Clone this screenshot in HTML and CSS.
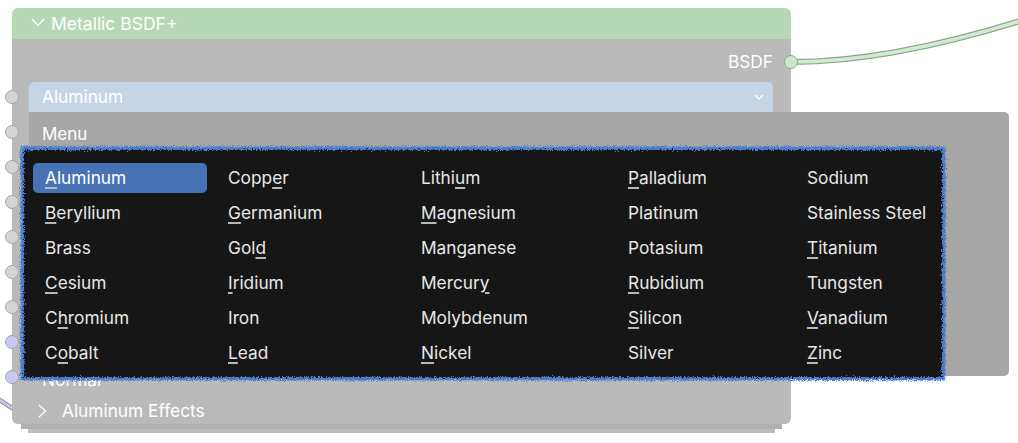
FILE: index.html
```html
<!DOCTYPE html>
<html>
<head>
<meta charset="utf-8">
<link rel="stylesheet" href="styles.css">
</head>
<body>
<svg class="defs" width="0" height="0" aria-hidden="true">
  <filter id="rough" x="-3%" y="-6%" width="106%" height="112%">
    <feTurbulence type="fractalNoise" baseFrequency="0.85" numOctaves="2" seed="3" result="n"/>
    <feDisplacementMap in="SourceGraphic" in2="n" scale="6" xChannelSelector="R" yChannelSelector="G"/>
  </filter>
</svg>
<svg class="wires" width="1018" height="443" viewBox="0 0 1018 443">
  <path d="M792 62 C 850 62, 920 52, 1020 21" stroke="#8f9f8f" stroke-width="6" fill="none"/>
  <path d="M792 62 C 850 62, 920 52, 1020 21" stroke="#cfeccf" stroke-width="3.6" fill="none"/>
  <path d="M-2 399 L15 410" stroke="#8f8fa8" stroke-width="4.5" fill="none"/>
  <path d="M-2 399 L15 410" stroke="#c9c9ee" stroke-width="2.6" fill="none"/>
</svg>
<div class="canvas">
  <div class="node">
    <div class="header">
      <svg class="hchev" width="14" height="9" viewBox="0 0 14 9"><polyline points="1,1 7,7.5 13,1" fill="none" stroke="#fff" stroke-width="1.4"/></svg>
      <span>Metallic BSDF+</span>
    </div>
    <div class="nbody">
      <div class="row out">BSDF<span class="sock sock-out"></span></div>
      <div class="row"><span class="sock"></span>
        <div class="select"><span>Aluminum</span>
          <svg class="schev" width="10" height="6" viewBox="0 0 10 6"><polyline points="1,1 5,5 9,1" fill="none" stroke="#fff" stroke-width="1.5"/></svg>
        </div>
      </div>
      <div class="row"><span class="sock"></span></div>
      <div class="row"><span class="sock"></span></div>
      <div class="row"><span class="sock"></span></div>
      <div class="row"><span class="sock"></span></div>
      <div class="row"><span class="sock"></span></div>
      <div class="row"><span class="sock"></span></div>
      <div class="row"><span class="sock sock-lav"></span></div>
      <div class="row"><span class="sock sock-lav"></span><span class="lbl">Normal</span></div>
      <div class="row panelrow">
        <svg class="pchev" width="9" height="14" viewBox="0 0 9 14"><polyline points="1,1 7.5,7 1,13" fill="none" stroke="#fff" stroke-width="1.4"/></svg>
        <span>Aluminum Effects</span>
      </div>
    </div>
    <div class="popup">
      <div class="ptitle">Menu</div>
      <div class="menu">
        <div class="menu-bg"></div>
        <div class="grid">
          <div class="item active"><u>A</u>luminum</div>
          <div class="item">Copp<u>e</u>r</div>
          <div class="item">Lithi<u>u</u>m</div>
          <div class="item"><u>P</u>alladium</div>
          <div class="item">Sodium</div>

          <div class="item"><u>B</u>eryllium</div>
          <div class="item"><u>G</u>ermanium</div>
          <div class="item"><u>M</u>agnesium</div>
          <div class="item">Platinum</div>
          <div class="item">Stainless Steel</div>

          <div class="item">Brass</div>
          <div class="item">Gol<u>d</u></div>
          <div class="item">Manganese</div>
          <div class="item">Potasium</div>
          <div class="item"><u>T</u>itanium</div>

          <div class="item"><u>C</u>esium</div>
          <div class="item"><u>I</u>ridium</div>
          <div class="item">Mercur<u>y</u></div>
          <div class="item"><u>R</u>ubidium</div>
          <div class="item">Tungsten</div>

          <div class="item">C<u>h</u>romium</div>
          <div class="item">Iron</div>
          <div class="item">Molybdenum</div>
          <div class="item"><u>S</u>ilicon</div>
          <div class="item"><u>V</u>anadium</div>

          <div class="item">C<u>o</u>balt</div>
          <div class="item"><u>L</u>ead</div>
          <div class="item"><u>N</u>ickel</div>
          <div class="item">Silver</div>
          <div class="item"><u>Z</u>inc</div>
        </div>
      </div>
    </div>
  </div>
</div>
</body>
</html>
```
FILE: styles.css
```css
html, body {
  margin: 0;
  padding: 0;
  background: #ffffff;
  width: 1018px;
  height: 443px;
  overflow: hidden;
  font-family: Inter, "Noto Sans", "DejaVu Sans", sans-serif;
}
.defs { position: absolute; width: 0; height: 0; }
.wires { position: absolute; left: 0; top: 0; }
.canvas {
  position: relative;
  padding: 8px 0 0 12px;
}
.node {
  position: relative;
  width: 779px;
  border-radius: 6px;
  box-shadow: 0 14px 0 -9px #b0b0b0, 0 25px 0 -16px #bdbdbd;
}
.header {
  height: 31px;
  background: #b5d8b5;
  border-radius: 6px 6px 0 0;
  display: flex;
  align-items: center;
  color: #fff;
  font-size: 17.5px;
}
.hchev { margin: 0 6px 2px 19px; }
.nbody {
  background: #bababa;
  border-radius: 0 0 6px 6px;
  padding-top: 5px;
  height: 385px;
  box-sizing: border-box;
}
.row {
  position: relative;
  height: 35px;
  display: flex;
  align-items: center;
  color: #fff;
  font-size: 17.3px;
}
.row.out { justify-content: flex-end; padding-right: 18px; }
.sock {
  position: absolute;
  left: -7px;
  top: 50%;
  width: 12px;
  height: 12px;
  margin-top: -7px;
  border-radius: 50%;
  background: #d4d4d4;
  border: 1px solid #a8a8a8;
}
.sock-out { left: auto; right: -7px; background: #c9e9c9; border-color: #93a893; }
.sock-lav { background: #cacaf0; border-color: #a0a0bc; }
.select {
  margin-left: 17px;
  width: 744px;
  height: 30px;
  background: #c6d5e6;
  border-radius: 5px 5px 0 0;
  display: flex;
  align-items: center;
  justify-content: space-between;
  padding: 0 9px 0 13px;
  box-sizing: border-box;
}
.lbl { margin: 5px 0 0 30px; }
.panelrow { padding-left: 26px; padding-bottom: 2px; box-sizing: border-box; }
.pchev { margin-right: 15px; }
.popup {
  position: absolute;
  left: 17px;
  top: 104px;
  width: 980px;
  height: 264px;
  background: #a7a7a7;
  border-radius: 0 5px 5px 0;
}
.ptitle {
  color: #fff;
  font-size: 17px;
  line-height: 20px;
  padding: 12px 0 0 13px;
}
.menu {
  position: absolute;
  left: -5px;
  top: 38px;
  width: 918px;
  height: 227px;
}
.menu-bg {
  position: absolute;
  inset: 0;
  background: #171717;
  box-shadow: 0 0 0 3.5px #4a7bcb;
  filter: url(#rough);
}
.grid {
  position: relative;
  display: grid;
  grid-template-columns: 174px 184px 198px 170px 130px;
  grid-auto-rows: 30px;
  column-gap: 9px;
  row-gap: 5px;
  padding: 13px 0 0 9px;
}
.item {
  color: #e8e8e8;
  font-size: 17.3px;
  line-height: 30px;
  padding-left: 12px;
  border-radius: 5px;
  white-space: nowrap;
}
.item.active { background: #4773b4; color: #fff; }
.item u {
  text-decoration-color: #b8b8b8;
  text-decoration-thickness: 1.5px;
  text-underline-offset: 3px;
}
```
